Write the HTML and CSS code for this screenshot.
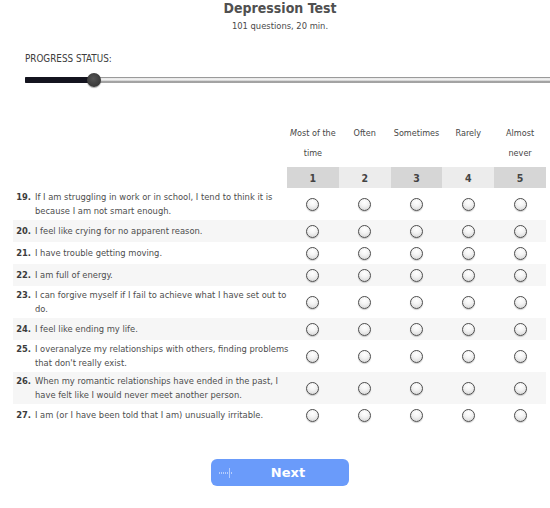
FILE: index.html
```html
<!DOCTYPE html>
<html>
<head>
<meta charset="utf-8">
<link rel="stylesheet" href="styles.css">
</head>
<body>
<div class="page">
  <header class="head">
    <h1 class="title">Depression Test</h1>
    <p class="sub">101 questions, 20 min.</p>
  </header>
  <section class="progress">
    <div class="progress-label">PROGRESS STATUS:</div>
    <div class="track">
      <div class="fill" style="width:69px"></div>
      <div class="knob" style="left:62px"></div>
    </div>
  </section>
  <table class="quiz">
    <colgroup>
      <col class="c-q"><col class="c-a"><col class="c-a"><col class="c-a"><col class="c-a"><col class="c-a">
    </colgroup>
    <thead>
      <tr class="labels">
        <th></th>
        <th><i>M</i>ost of the<br>time</th>
        <th>Often</th>
        <th>Sometimes</th>
        <th>Rarely</th>
        <th>Almost<br>never</th>
      </tr>
      <tr class="nums">
        <th class="blank"></th>
        <th class="dk">1</th>
        <th class="lt">2</th>
        <th class="dk">3</th>
        <th class="lt">4</th>
        <th class="dk">5</th>
      </tr>
    </thead>
    <tbody>
      <tr class="two"><td><div class="q"><b>19.</b><span>If I am struggling in work or in school, I tend to think it is because I am not smart enough.</span></div></td><td><input type="radio" name="q19"></td><td><input type="radio" name="q19"></td><td><input type="radio" name="q19"></td><td><input type="radio" name="q19"></td><td><input type="radio" name="q19"></td></tr>
      <tr class="one alt"><td><div class="q"><b>20.</b><span>I feel like crying for no apparent reason.</span></div></td><td><input type="radio" name="q20"></td><td><input type="radio" name="q20"></td><td><input type="radio" name="q20"></td><td><input type="radio" name="q20"></td><td><input type="radio" name="q20"></td></tr>
      <tr class="one"><td><div class="q"><b>21.</b><span>I have trouble getting moving.</span></div></td><td><input type="radio" name="q21"></td><td><input type="radio" name="q21"></td><td><input type="radio" name="q21"></td><td><input type="radio" name="q21"></td><td><input type="radio" name="q21"></td></tr>
      <tr class="one alt"><td><div class="q"><b>22.</b><span>I am full of energy.</span></div></td><td><input type="radio" name="q22"></td><td><input type="radio" name="q22"></td><td><input type="radio" name="q22"></td><td><input type="radio" name="q22"></td><td><input type="radio" name="q22"></td></tr>
      <tr class="two"><td><div class="q"><b>23.</b><span>I can forgive myself if I fail to achieve what I have set out to do.</span></div></td><td><input type="radio" name="q23"></td><td><input type="radio" name="q23"></td><td><input type="radio" name="q23"></td><td><input type="radio" name="q23"></td><td><input type="radio" name="q23"></td></tr>
      <tr class="one alt"><td><div class="q"><b>24.</b><span>I feel like ending my life.</span></div></td><td><input type="radio" name="q24"></td><td><input type="radio" name="q24"></td><td><input type="radio" name="q24"></td><td><input type="radio" name="q24"></td><td><input type="radio" name="q24"></td></tr>
      <tr class="two"><td><div class="q"><b>25.</b><span>I overanalyze my relationships with others, finding problems that don't really exist.</span></div></td><td><input type="radio" name="q25"></td><td><input type="radio" name="q25"></td><td><input type="radio" name="q25"></td><td><input type="radio" name="q25"></td><td><input type="radio" name="q25"></td></tr>
      <tr class="two alt"><td><div class="q"><b>26.</b><span>When my romantic relationships have ended in the past, I have felt like I would never meet another person.</span></div></td><td><input type="radio" name="q26"></td><td><input type="radio" name="q26"></td><td><input type="radio" name="q26"></td><td><input type="radio" name="q26"></td><td><input type="radio" name="q26"></td></tr>
      <tr class="one"><td><div class="q"><b>27.</b><span>I am (or I have been told that I am) unusually irritable.</span></div></td><td><input type="radio" name="q27"></td><td><input type="radio" name="q27"></td><td><input type="radio" name="q27"></td><td><input type="radio" name="q27"></td><td><input type="radio" name="q27"></td></tr>
    </tbody>
  </table>
  <div class="actions">
    <button class="next" type="button">
      <svg class="next-icon" width="14" height="12" viewBox="0 0 14 12">
        <g fill="#fff">
          <rect x="0" y="5.5" width="1" height="1"/>
          <rect x="2" y="5.5" width="1" height="1"/>
          <rect x="4" y="5.5" width="1" height="1"/>
          <rect x="6" y="5.5" width="1" height="1"/>
          <rect x="8" y="5.5" width="1" height="1"/>
          <rect x="10" y="5.5" width="1" height="1"/>
          <rect x="12" y="5.5" width="1" height="1"/>
          <rect x="10" y="1.5" width="1" height="1"/>
          <rect x="10" y="3.5" width="1" height="1"/>
          <rect x="10" y="7.5" width="1" height="1"/>
          <rect x="10" y="9.5" width="1" height="1"/>
        </g>
      </svg>
      <span>Next</span>
    </button>
  </div>
</div>
</body>
</html>
```
FILE: styles.css
```css
* { box-sizing: border-box; }
html, body { margin: 0; padding: 0; background: #fff; }
body {
  font-family: "DejaVu Sans Condensed", "DejaVu Sans", sans-serif;
  color: #474747;
  width: 550px;
  overflow: hidden;
}
.page { width: 550px; }
.head { text-align: center; padding-left: 10px; }
.title {
  margin: 0;
  font-size: 14px;
  line-height: 16px;
  font-weight: bold;
  color: #505050;
}
.sub {
  margin: 4px 0 0;
  font-size: 9.3px;
  line-height: 12px;
  color: #4a4a4a;
}
.progress { padding: 21px 0 0 25px; }
.progress-label {
  font-size: 9.8px;
  line-height: 12px;
  color: #3d3d3d;
}
.track {
  position: relative;
  margin-top: 8px;
  height: 14px;
}
.track::before {
  content: "";
  position: absolute;
  left: 0; right: 0; top: 4px;
  height: 6px;
  background: linear-gradient(#9a9a9a 0, #9a9a9a 17%, #e6e6e6 17%, #f4f4f4 50%, #bdbdbd 66%, #8c8c8c 83%, #b8b8b8 100%);
}
.fill {
  position: absolute;
  left: 0; top: 4px;
  height: 6px;
  background: #14141f;
  border-radius: 1px;
}
.knob {
  position: absolute;
  top: 0;
  width: 14px; height: 14px;
  border-radius: 50%;
  background: radial-gradient(circle at 45% 40%, #555 0, #3c3c3c 60%, #2a2a2a 100%);
  box-shadow: 0 1px 1px rgba(0,0,0,.35);
}
.quiz {
  margin: 36px 0 0 13px;
  width: 533px;
  border-collapse: collapse;
  table-layout: fixed;
  font-size: 9.3px;
}
.c-q { width: 274px; }
.c-a { width: 51.8px; }
.labels th {
  font-weight: normal;
  font-size: 9px;
  line-height: 20px;
  height: 44px;
  padding: 0 0 4px;
  vertical-align: top;
  text-align: center;
  color: #474747;
  white-space: nowrap;
}
.labels i { font-style: italic; }
.nums th {
  height: 21px;
  padding: 0;
  font-size: 10.5px;
  font-weight: bold;
  text-align: center;
  color: #444;
}
.nums .blank { background: transparent; }
.nums .dk { background: #d6d6d6; }
.nums .lt { background: #ececec; }
tbody td {
  padding: 0;
  text-align: center;
  vertical-align: middle;
}
tbody tr.one { height: 22px; }
tbody tr.two { height: 32px; }
tbody tr.alt td { background: #f6f6f6; }
.q {
  display: flex;
  text-align: left;
  line-height: 14px;
  color: #4d4d4d;
}
.q b {
  width: 18px;
  text-align: right;
  flex: none;
  color: #3c3c3c;
}
.q span {
  padding-left: 4px;
  margin-right: -6px;
}
input[type="radio"] {
  -webkit-appearance: none;
  appearance: none;
  margin: 0;
  width: 13px;
  height: 13px;
  border-radius: 50%;
  border: 1px solid #4e4e4e;
  background: radial-gradient(circle at 50% 30%, #fff 0, #f4f4f4 40%, #cfcfcf 100%);
  box-shadow: 0 1px 1px rgba(0,0,0,.2);
  vertical-align: middle;
  display: inline-block;
}
.actions {
  display: flex;
  justify-content: center;
  padding: 33px 0 0 10px;
}
.next {
  position: relative;
  width: 138px;
  height: 27px;
  border: none;
  border-radius: 6px;
  background: #6a9bfa;
  color: #fff;
  font-family: "DejaVu Sans", sans-serif;
  font-weight: bold;
  font-size: 13px;
  display: flex;
  align-items: center;
  padding: 0 0 0 8px;
}
.next-icon { flex: none; }
.next span {
  flex: 1;
  text-align: center;
  padding-right: 6px;
}
```
